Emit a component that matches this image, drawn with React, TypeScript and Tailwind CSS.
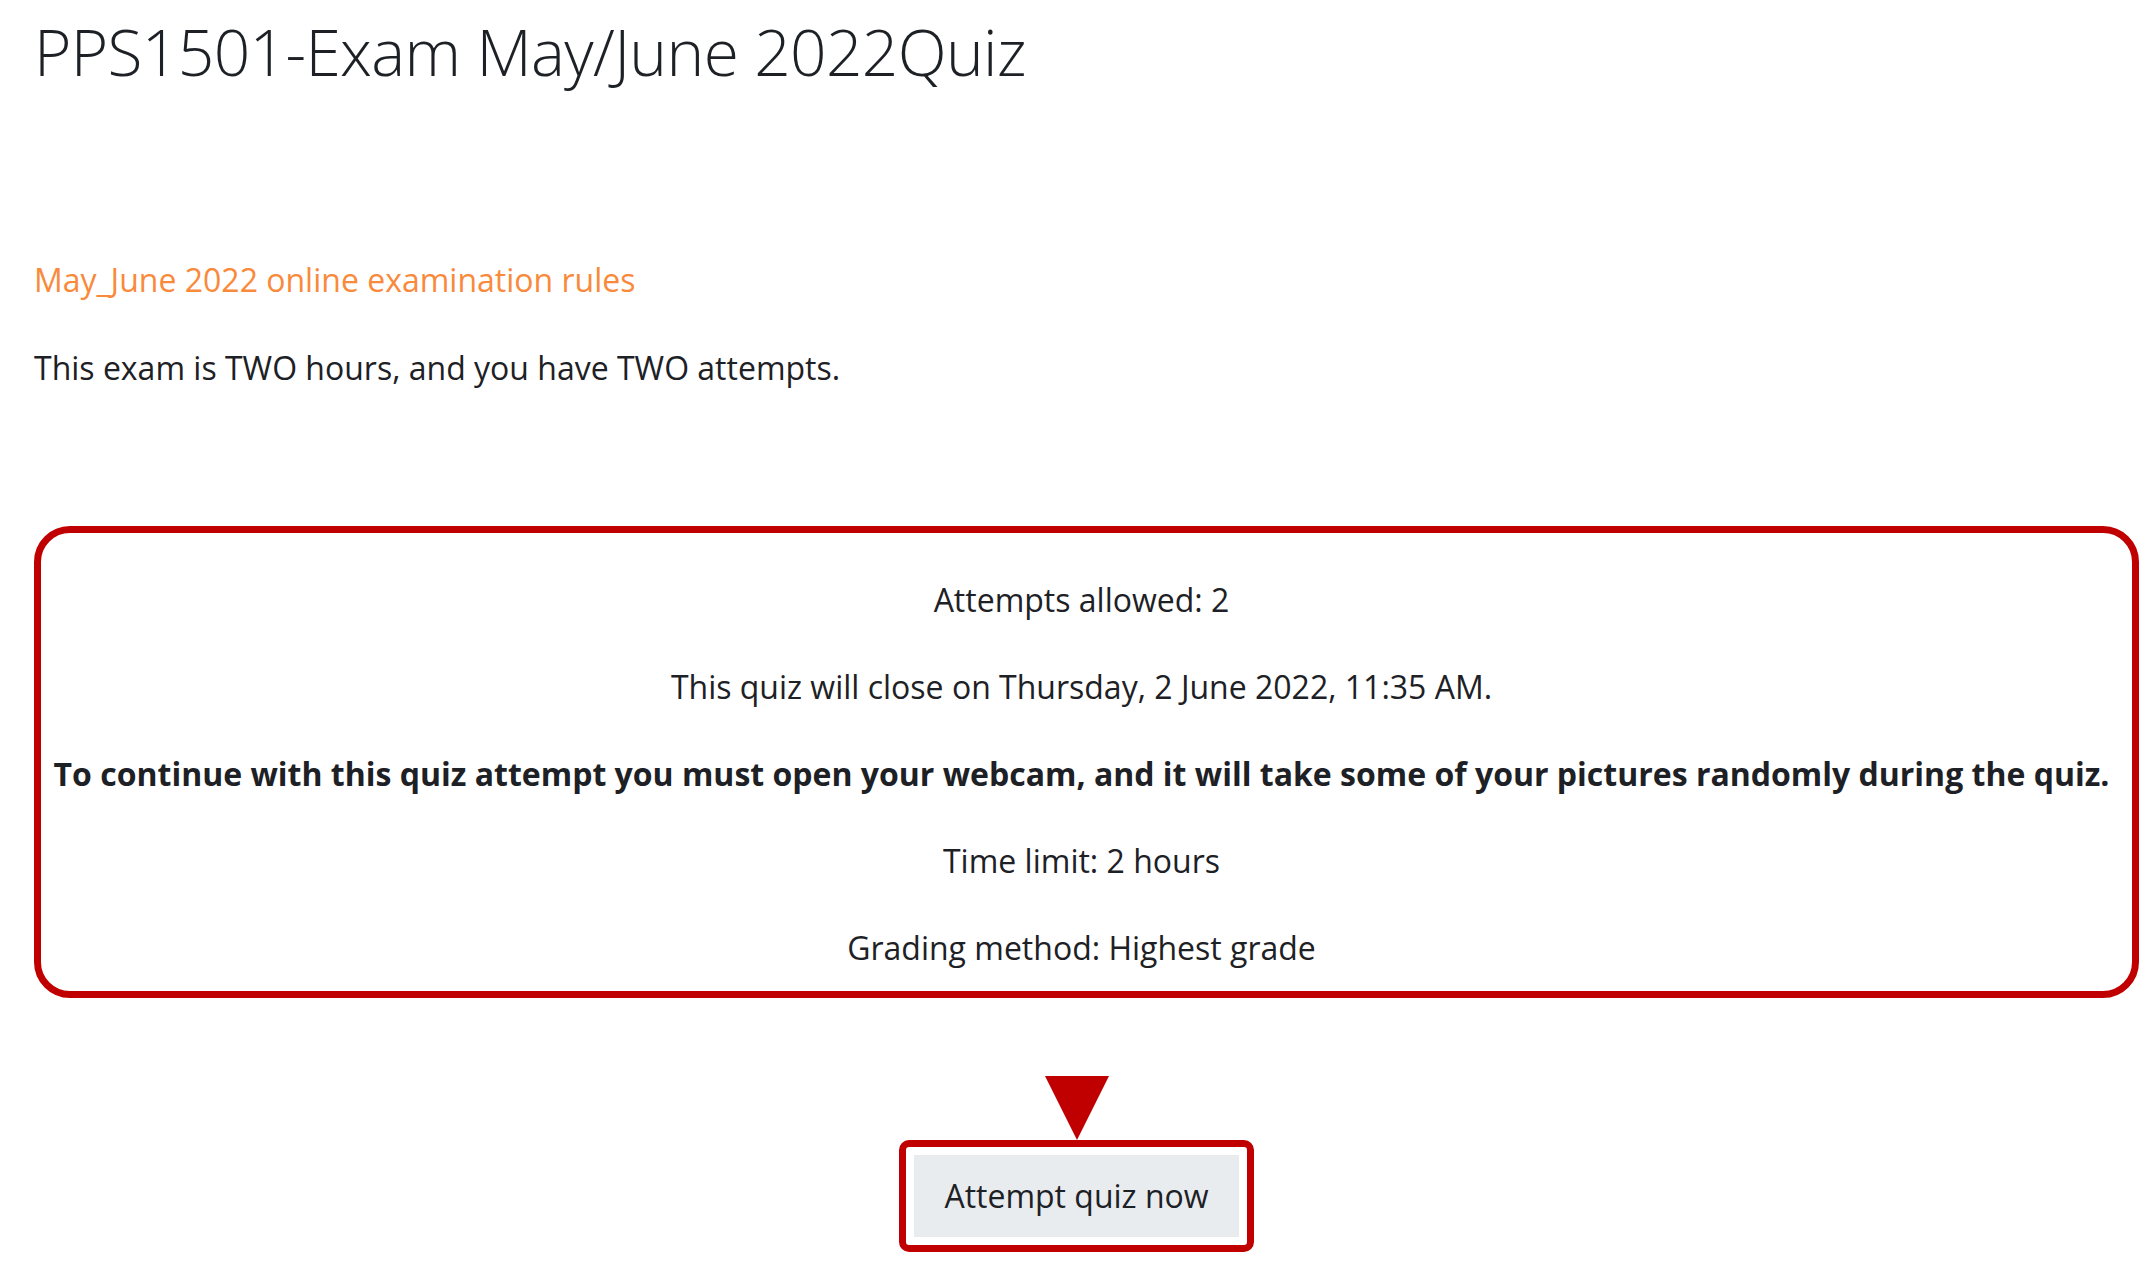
import React from 'react';

const font = { fontFamily: '"Open Sans", "Noto Sans", sans-serif' };

const details = [
  { text: 'Attempts allowed: 2' },
  { text: 'This quiz will close on Thursday, 2 June 2022, 11:35 AM.' },
  {
    text: 'To continue with this quiz attempt you must open your webcam, and it will take some of your pictures randomly during the quiz.',
    bold: true,
  },
  { text: 'Time limit: 2 hours' },
  { text: 'Grading method: Highest grade' },
];

export default function App() {
  return (
    <div
      className="min-h-screen w-full bg-white pl-[34px] text-[#1d2125] overflow-hidden"
      style={font}
    >
      <h2 className="pt-[12px] text-[64px] font-light leading-[80px] tracking-[-0.01em] text-[#1d2125]">
        PPS1501-Exam May/June 2022Quiz
      </h2>

      <div className="mt-[166px] text-[32px] leading-[44px]">
        <a href="#" className="text-[#f98a3c]">
          May_June 2022 online examination rules
        </a>
      </div>

      <p className="mt-[44px] text-[32px] leading-[44px]">
        This exam is TWO hours, and you have TWO attempts.
      </p>

      <div className="mt-[136px] h-[472px] rounded-[36px] border-[7px] border-[#c00000] pr-[10px]">
        <div className="flex flex-col items-center gap-[43px] pt-[45px] text-[32px] leading-[44px]">
          {details.map((d) => (
            <p key={d.text} className={d.bold ? 'font-bold text-center' : 'text-center'}>
              {d.text}
            </p>
          ))}
        </div>
      </div>

      <div className="flex flex-col items-center pr-[20px] pt-[78px]">
        <svg width="64" height="64" viewBox="0 0 64 64" className="block">
          <polygon points="0,0 64,0 32,64" fill="#c00000" />
        </svg>
        <div className="rounded-[10px] border-[7px] border-[#c00000] p-[8px]">
          <button className="bg-[#e9ecef] px-[30px] h-[82px] text-[32px] leading-[44px] text-[#1d2125]">
            Attempt quiz now
          </button>
        </div>
      </div>
    </div>
  );
}
